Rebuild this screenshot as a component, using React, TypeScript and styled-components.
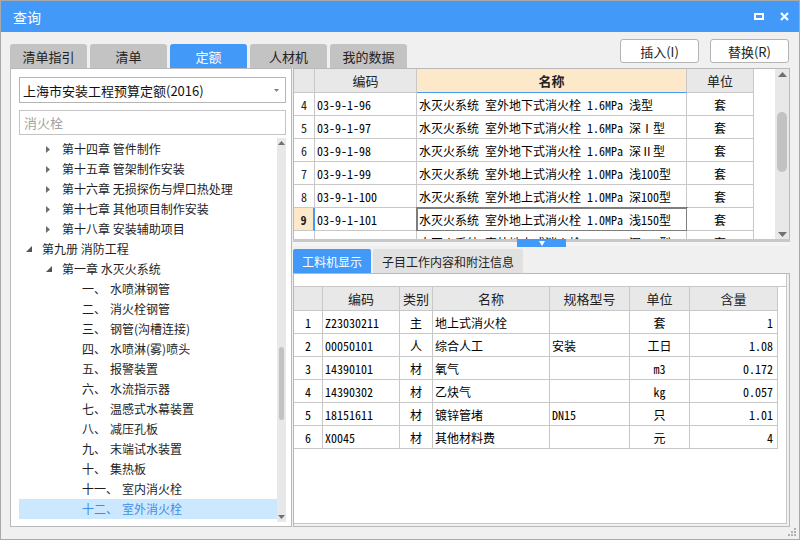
import React from 'react';
import styled, { createGlobalStyle } from 'styled-components';

const Colors = {
  blue: '#4299f7',
  bg: '#f0f0f0',
  line: '#c8c8c8',
  frame: '#b9b9b9',
  header: '#e8e8e8',
  orange: '#fde8c9',
  text: '#1c1c1c',
  tab: '#c3c3c3',
  scroll: '#e8e8e8',
  thumb: '#c2c2c2',
  arrow: '#707070',
};

const uiFont = `"Noto Sans CJK SC", "Noto Sans", sans-serif`;
const dataFont = `"Noto Sans Mono CJK SC", "Noto Sans CJK SC", monospace`;

const GlobalStyle = createGlobalStyle`
  html, body {
    margin: 0;
    padding: 0;
    background: #ffffff;
  }
  body {
    font-family: ${uiFont};
    color: ${Colors.text};
  }
  * {
    box-sizing: border-box;
  }
`;

type TreeItem = {
  level: number;
  arrow?: 'open' | 'closed';
  prefix?: string;
  label: string;
  selected?: boolean;
};

const treeRows: TreeItem[] = [
  { level: 2, arrow: 'closed', label: '第十四章 管件制作' },
  { level: 2, arrow: 'closed', label: '第十五章 管架制作安装' },
  { level: 2, arrow: 'closed', label: '第十六章 无损探伤与焊口热处理' },
  { level: 2, arrow: 'closed', label: '第十七章 其他项目制作安装' },
  { level: 2, arrow: 'closed', label: '第十八章 安装辅助项目' },
  { level: 1, arrow: 'open', label: '第九册 消防工程' },
  { level: 2, arrow: 'open', label: '第一章 水灭火系统' },
  { level: 3, prefix: '一、', label: '水喷淋钢管' },
  { level: 3, prefix: '二、', label: '消火栓钢管' },
  { level: 3, prefix: '三、', label: '钢管(沟槽连接)' },
  { level: 3, prefix: '四、', label: '水喷淋(雾)喷头' },
  { level: 3, prefix: '五、', label: '报警装置' },
  { level: 3, prefix: '六、', label: '水流指示器' },
  { level: 3, prefix: '七、', label: '温感式水幕装置' },
  { level: 3, prefix: '八、', label: '减压孔板' },
  { level: 3, prefix: '九、', label: '末端试水装置' },
  { level: 3, prefix: '十、', label: '集热板' },
  { level: 3, prefix: '十一、', label: '室内消火栓' },
  { level: 3, prefix: '十二、', label: '室外消火栓', selected: true },
  { level: 3, prefix: '十三、', label: '消防水泵接合器' },
];

const quotaRows = [
  { no: '4', code: '03-9-1-96', name: '水灭火系统 室外地下式消火栓 1.6MPa 浅型', unit: '套' },
  { no: '5', code: '03-9-1-97', name: '水灭火系统 室外地下式消火栓 1.6MPa 深Ⅰ型', unit: '套' },
  { no: '6', code: '03-9-1-98', name: '水灭火系统 室外地下式消火栓 1.6MPa 深Ⅱ型', unit: '套' },
  { no: '7', code: '03-9-1-99', name: '水灭火系统 室外地上式消火栓 1.0MPa 浅100型', unit: '套' },
  { no: '8', code: '03-9-1-100', name: '水灭火系统 室外地上式消火栓 1.0MPa 深100型', unit: '套' },
  { no: '9', code: '03-9-1-101', name: '水灭火系统 室外地上式消火栓 1.0MPa 浅150型', unit: '套', selected: true },
  { no: '10', code: '03-9-1-102', name: '水灭火系统 室外地上式消火栓 1.0MPa 深150型', unit: '套' },
];

const materialRows = [
  { no: '1', code: 'Z23030211', kind: '主', name: '地上式消火栓', spec: '', unit: '套', qty: '1' },
  { no: '2', code: '00050101', kind: '人', name: '综合人工', spec: '安装', unit: '工日', qty: '1.08' },
  { no: '3', code: '14390101', kind: '材', name: '氧气', spec: '', unit: 'm3', qty: '0.172' },
  { no: '4', code: '14390302', kind: '材', name: '乙炔气', spec: '', unit: 'kg', qty: '0.057' },
  { no: '5', code: '18151611', kind: '材', name: '镀锌管堵', spec: 'DN15', unit: '只', qty: '1.01' },
  { no: '6', code: 'X0045', kind: '材', name: '其他材料费', spec: '', unit: '元', qty: '4' },
];

const topTabs = ['清单指引', '清单', '定额', '人材机', '我的数据'];

const App: React.FC = () => {
  return (
    <>
      <GlobalStyle />
      <Window>
        <TitleBar>
          <Title>查询</Title>
          <WindowControls>
            <svg width="10" height="7" viewBox="0 0 10 7">
              <path d="M0 0H10V7H0Z M2 2V5H8V2Z" fill="#fff" fillRule="evenodd" />
            </svg>
            <svg width="9" height="9" viewBox="0 0 9 9">
              <path d="M1 1L8 8M8 1L1 8" stroke="#fff" strokeWidth="2.2" />
            </svg>
          </WindowControls>
        </TitleBar>

        <Toolbar>
          <TabStrip>
            {topTabs.map((t) => (
              <TopTab key={t} active={t === '定额'}>
                {t}
              </TopTab>
            ))}
          </TabStrip>
          <ButtonGroup>
            <ActionButton>插入(I)</ActionButton>
            <ActionButton>替换(R)</ActionButton>
          </ButtonGroup>
        </Toolbar>

        <Main>
          <LeftPanel>
            <Dropdown>
              <span>上海市安装工程预算定额(2016)</span>
              <svg width="5" height="3" viewBox="0 0 5 3">
                <polygon points="0,0 5,0 2.5,3" fill="#808080" />
              </svg>
            </Dropdown>
            <SearchBox>消火栓</SearchBox>
            <Tree>
              <TreeList>
                {treeRows.map((r, i) => (
                  <TreeRow key={i} level={r.level} selected={r.selected}>
                    <ArrowBox>
                      {r.arrow === 'closed' && (
                        <svg width="4" height="7" viewBox="0 0 4 7">
                          <polygon points="0,0 4,3.5 0,7" fill="#6e6e6e" />
                        </svg>
                      )}
                      {r.arrow === 'open' && (
                        <svg width="6" height="6" viewBox="0 0 6 6">
                          <polygon points="6,0 6,6 0,6" fill="#555" />
                        </svg>
                      )}
                    </ArrowBox>
                    {r.prefix && <Prefix>{r.prefix}</Prefix>}
                    <span>{r.label}</span>
                  </TreeRow>
                ))}
              </TreeList>
              <ScrollBar width={9}>
                <ScrollArrow>
                  <svg width="7" height="4" viewBox="0 0 7 4">
                    <polygon points="0,4 7,4 3.5,0" fill={Colors.arrow} />
                  </svg>
                </ScrollArrow>
                <ScrollTrack>
                  <Thumb offset={199} size={73} width={5} />
                </ScrollTrack>
                <ScrollArrow>
                  <svg width="7" height="4" viewBox="0 0 7 4">
                    <polygon points="0,0 7,0 3.5,4" fill={Colors.arrow} />
                  </svg>
                </ScrollArrow>
              </ScrollBar>
            </Tree>
          </LeftPanel>

          <RightPanel>
            <QuotaBox>
              <GridArea>
                <QuotaRow header>
                  <Cell header />
                  <Cell header align="center">编码</Cell>
                  <Cell header align="center" highlight>
                    名称
                  </Cell>
                  <Cell header align="center">单位</Cell>
                </QuotaRow>
                {quotaRows.map((r) => (
                  <QuotaRow key={r.no}>
                    <RowNo selected={r.selected}>{r.no}</RowNo>
                    <Cell>{r.code}</Cell>
                    <Cell current={r.selected}>{r.name}</Cell>
                    <Cell align="center">{r.unit}</Cell>
                  </QuotaRow>
                ))}
              </GridArea>
              <ScrollBar width={14}>
                <ScrollArrow>
                  <svg width="9" height="5" viewBox="0 0 9 5">
                    <polygon points="0,5 9,5 4.5,0" fill={Colors.arrow} />
                  </svg>
                </ScrollArrow>
                <ScrollTrack>
                  <Thumb offset={33} size={60} width={10} />
                </ScrollTrack>
                <ScrollArrow>
                  <svg width="9" height="5" viewBox="0 0 9 5">
                    <polygon points="0,0 9,0 4.5,5" fill={Colors.arrow} />
                  </svg>
                </ScrollArrow>
              </ScrollBar>
            </QuotaBox>

            <Splitter>
              <SplitHandle>
                <svg width="6" height="5" viewBox="0 0 6 5">
                  <polygon points="0,0 6,0 3,5" fill="#fff" />
                </svg>
              </SplitHandle>
            </Splitter>

            <SubTabs>
              <SubTab active>工料机显示</SubTab>
              <SubTab>子目工作内容和附注信息</SubTab>
            </SubTabs>

            <DetailPanel>
              <DetailInner>
                <MaterialRow header>
                  <Cell header />
                  <Cell header align="center">编码</Cell>
                  <Cell header align="center">类别</Cell>
                  <Cell header align="center">名称</Cell>
                  <Cell header align="center">规格型号</Cell>
                  <Cell header align="center">单位</Cell>
                  <Cell header align="center">含量</Cell>
                </MaterialRow>
                {materialRows.map((r) => (
                  <MaterialRow key={r.no}>
                    <Cell align="center" mono>
                      {r.no}
                    </Cell>
                    <Cell mono>{r.code}</Cell>
                    <Cell align="center">{r.kind}</Cell>
                    <Cell>{r.name}</Cell>
                    <Cell mono>{r.spec}</Cell>
                    <Cell align="center" mono>
                      {r.unit}
                    </Cell>
                    <Cell align="right" mono>
                      {r.qty}
                    </Cell>
                  </MaterialRow>
                ))}
              </DetailInner>
            </DetailPanel>
          </RightPanel>
        </Main>

        <Grip>
          <svg width="8" height="8" viewBox="0 0 8 8">
            <rect x="6" y="0" width="2" height="2" fill="#b0b0b0" />
            <rect x="3" y="3" width="2" height="2" fill="#b0b0b0" />
            <rect x="6" y="3" width="2" height="2" fill="#b0b0b0" />
            <rect x="0" y="6" width="2" height="2" fill="#b0b0b0" />
            <rect x="3" y="6" width="2" height="2" fill="#b0b0b0" />
            <rect x="6" y="6" width="2" height="2" fill="#b0b0b0" />
          </svg>
        </Grip>
      </Window>
    </>
  );
};

export default App;

const Window = styled.div`
  position: relative;
  width: 800px;
  height: 540px;
  border: 1px solid #a9a9a9;
  background: ${Colors.bg};
  display: flex;
  flex-direction: column;
  overflow: hidden;
`;

const TitleBar = styled.div`
  height: 31px;
  flex-shrink: 0;
  background: ${Colors.blue};
  display: flex;
  align-items: center;
  padding: 0 10px 0 12px;
`;

const Title = styled.div`
  color: #fff;
  font-size: 14px;
`;

const WindowControls = styled.div`
  margin-left: auto;
  display: flex;
  align-items: center;
  gap: 16px;
`;

const Toolbar = styled.div`
  height: 36px;
  flex-shrink: 0;
  display: flex;
  padding: 0 9px;
`;

const TabStrip = styled.div`
  display: flex;
  gap: 3px;
  align-self: flex-end;
`;

const TopTab = styled.div<{ active?: boolean }>`
  width: 77px;
  height: 24px;
  border-radius: 3px 3px 0 0;
  background: ${(p) => (p.active ? Colors.blue : Colors.tab)};
  color: ${(p) => (p.active ? '#fff' : '#222')};
  font-size: 13px;
  display: flex;
  align-items: center;
  justify-content: center;
`;

const ButtonGroup = styled.div`
  margin-left: auto;
  margin-top: 7px;
  margin-right: 1px;
  display: flex;
  gap: 11px;
  align-self: flex-start;
`;

const ActionButton = styled.div`
  width: 79px;
  height: 24px;
  border: 1px solid #b4b4b4;
  border-radius: 3px;
  background: #fff;
  font-size: 13px;
  color: #222;
  display: flex;
  align-items: center;
  justify-content: center;
`;

const Main = styled.div`
  height: 459px;
  flex-shrink: 0;
  display: flex;
  gap: 1px;
  padding: 0 9px;
`;

const LeftPanel = styled.div`
  width: 282px;
  flex-shrink: 0;
  background: #fff;
  border: 1px solid ${Colors.frame};
  padding: 8px 5px 4px 8px;
  display: flex;
  flex-direction: column;
`;

const Dropdown = styled.div`
  height: 26px;
  flex-shrink: 0;
  border: 1px solid #b5b5b5;
  display: flex;
  align-items: center;
  justify-content: space-between;
  padding: 0 6px 0 3px;
  font-size: 13px;
  color: #111;
`;

const SearchBox = styled.div`
  height: 25px;
  flex-shrink: 0;
  margin-top: 7px;
  border: 1px solid #c4c4c4;
  display: flex;
  align-items: center;
  padding: 0 4px;
  font-size: 13px;
  color: #a3a3a3;
`;

const Tree = styled.div`
  flex: 1;
  margin-top: 3px;
  display: flex;
  overflow: hidden;
`;

const TreeList = styled.div`
  flex: 1;
  overflow: hidden;
  padding-top: 1px;
`;

const TreeRow = styled.div<{ level: number; selected?: boolean }>`
  height: 20px;
  display: flex;
  align-items: center;
  white-space: nowrap;
  padding-left: ${(p) => (p.level - 1) * 20 + 3}px;
  background: ${(p) => (p.selected ? '#cce8ff' : 'transparent')};
  color: ${(p) => (p.selected ? '#3d8ee6' : '#1e1e1e')};
  font-size: 12px;
  line-height: 20px;
`;

const ArrowBox = styled.div`
  width: 20px;
  flex-shrink: 0;
  display: flex;
  align-items: center;
  padding-left: 4px;
`;

const Prefix = styled.span`
  margin-right: 4px;
`;

const ScrollBar = styled.div<{ width: number }>`
  width: ${(p) => p.width}px;
  flex-shrink: 0;
  background: ${Colors.scroll};
  display: flex;
  flex-direction: column;
`;

const ScrollArrow = styled.div`
  height: 10px;
  flex-shrink: 0;
  display: flex;
  align-items: center;
  justify-content: center;
`;

const ScrollTrack = styled.div`
  flex: 1;
  display: flex;
  flex-direction: column;
  align-items: center;
`;

const Thumb = styled.div<{ offset: number; size: number; width: number }>`
  margin-top: ${(p) => p.offset}px;
  height: ${(p) => p.size}px;
  width: ${(p) => p.width}px;
  border-radius: ${(p) => p.width / 2}px;
  background: ${Colors.thumb};
`;

const RightPanel = styled.div`
  flex: 1;
  display: flex;
  flex-direction: column;
  min-width: 0;
`;

const QuotaBox = styled.div`
  height: 171px;
  flex-shrink: 0;
  border: 1px solid ${Colors.frame};
  border-bottom: none;
  background: #fff;
  display: flex;
`;

const GridArea = styled.div`
  flex: 1;
  overflow: hidden;
`;

const QuotaRow = styled.div<{ header?: boolean }>`
  display: grid;
  grid-template-columns: 21px 102px 270px 67px;
  height: ${(p) => (p.header ? 24 : 23)}px;
`;

const MaterialRow = styled.div<{ header?: boolean }>`
  display: grid;
  grid-template-columns: 29px 77px 33px 117px 80px 60px 88px;
  height: ${(p) => (p.header ? 25 : 23)}px;
  border-top: ${(p) => (p.header ? `1px solid ${Colors.line}` : 'none')};
`;

const Cell = styled.div<{
  header?: boolean;
  align?: 'left' | 'center' | 'right';
  highlight?: boolean;
  current?: boolean;
  mono?: boolean;
}>`
  display: flex;
  align-items: center;
  justify-content: ${(p) =>
    p.align === 'center' ? 'center' : p.align === 'right' ? 'flex-end' : 'flex-start'};
  padding: ${(p) => (p.align === 'right' ? '0 4px 0 0' : '0 2px')};
  border-right: 1px solid ${Colors.line};
  border-bottom: 1px solid ${(p) => (p.highlight ? Colors.blue : Colors.line)};
  background: ${(p) => (p.highlight ? Colors.orange : p.header ? Colors.header : '#fff')};
  font-family: ${(p) => (p.header ? uiFont : dataFont)};
  font-size: ${(p) => (p.header ? 13 : 12)}px;
  font-weight: ${(p) => (p.highlight ? 'bold' : 'normal')};
  color: ${(p) => (p.header ? '#222' : '#000')};
  white-space: nowrap;
  overflow: hidden;
  outline: ${(p) => (p.current ? '2px solid #7d7d7d' : 'none')};
  outline-offset: -1px;
`;

const RowNo = styled.div<{ selected?: boolean }>`
  display: flex;
  align-items: center;
  justify-content: center;
  border-right: ${(p) => (p.selected ? `2px solid ${Colors.blue}` : `1px solid ${Colors.line}`)};
  border-bottom: 1px solid ${Colors.line};
  background: ${(p) => (p.selected ? Colors.orange : '#fff')};
  font-family: ${dataFont};
  font-size: 12px;
  font-weight: ${(p) => (p.selected ? 'bold' : 'normal')};
  color: #222;
`;

const Splitter = styled.div`
  height: 7px;
  flex-shrink: 0;
  background: linear-gradient(${Colors.line} 0 3px, #f4f4f4 3px);
  display: flex;
  justify-content: center;
`;

const SplitHandle = styled.div`
  width: 49px;
  height: 8px;
  background: ${Colors.blue};
  display: flex;
  align-items: center;
  justify-content: center;
  padding-top: 1px;
`;

const SubTabs = styled.div`
  height: 27px;
  flex-shrink: 0;
  display: flex;
  align-items: flex-end;
  gap: 2px;
`;

const SubTab = styled.div<{ active?: boolean }>`
  height: 24px;
  padding: 0 9px;
  border-radius: 2px 2px 0 0;
  background: ${(p) => (p.active ? Colors.blue : '#e1e1e1')};
  color: ${(p) => (p.active ? '#fff' : '#222')};
  font-size: 12px;
  display: flex;
  align-items: center;
`;

const DetailPanel = styled.div`
  flex: 1;
  border: 1px solid ${Colors.frame};
  background: ${Colors.bg};
  padding: 0 2px 2px 0;
  display: flex;
`;

const DetailInner = styled.div`
  flex: 1;
  background: #fff;
  border-right: 1px solid ${Colors.line};
  border-bottom: 1px solid ${Colors.line};
  padding-top: 12px;
  overflow: hidden;
`;

const Grip = styled.div`
  position: absolute;
  right: 3px;
  bottom: 3px;
  display: flex;
`;
